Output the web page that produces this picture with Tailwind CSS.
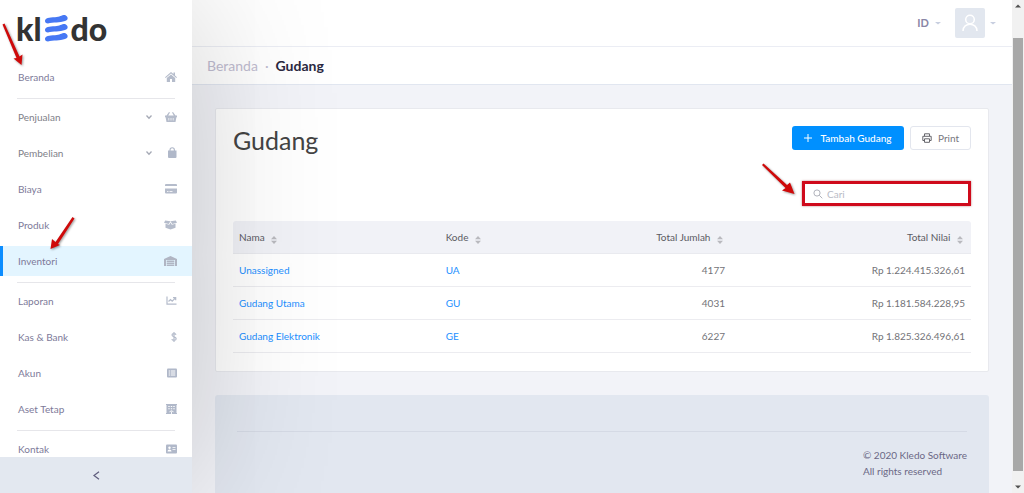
<!DOCTYPE html>
<html lang="id">
<head>
<meta charset="utf-8">
<meta name="viewport" content="width=device-width, initial-scale=1">
<title>Gudang - Kledo</title>
<script src="https://cdn.jsdelivr.net/npm/@tailwindcss/browser@4"></script>
</head>
<body class="relative flex h-screen overflow-hidden bg-[#f2f3f8] font-['Lato','Liberation_Sans',sans-serif] text-[10px] leading-4 text-[#6b6b73]">

<aside class="relative z-10 flex w-48 shrink-0 flex-col bg-white shadow-[0_0_150px_rgba(0,0,0,0.2)]">
  <a href="#" aria-label="kledo" class="flex h-[59px] shrink-0 items-start gap-[3px] pl-4 pt-[9px] text-[32px] font-black leading-10 text-[#333]">
    <span>kl</span>
    <svg class="mt-[6px] h-[27px] w-[23px] shrink-0" viewBox="0 0 23 27" fill="#4678f4"><path d="M0 6C0 3 4 2.500 10 2.300C15 2 16 0 20 0C24 2 23 5 20 6C15 8 8 7 3 8.500C1 8.500 0 7.500 0 6Z"/><path d="M0 15C0 12 4 11.500 10 11.300C15 11 16 9 20 9C24 11 23 14 20 15C15 17 8 16 3 17.500C1 17.500 0 16.500 0 15Z"/><path d="M0 24C0 21 4 20.500 10 20.300C15 20 16 18 20 18C24 20 23 23 20 24C15 26 8 25 3 26.500C1 26.500 0 25.500 0 24Z"/></svg>
    <span>do</span>
  </a>
  <nav class="min-h-0 flex-1 overflow-hidden text-[#7d7a99]">
    <a href="#" class="flex h-9 items-center justify-between pl-[18px] pr-[15px]">Beranda
      <svg class="size-3" viewBox="0 0 12 12" fill="#b5bccb"><path d="M6 1L0 6.200L.7 7L6 2.500L11.300 7L12 6.200L10 4.400V1.500H8.500V3.100Z"/><path d="M6 3.400L1.800 7V11H5V8H7V11H10.200V7Z"/></svg></a>
    <hr class="ml-[17px] mr-[17px] mt-[3px] border-[#e6e6ea]">
    <a href="#" class="flex h-9 items-center pl-[18px] pr-[15px] text-[#808088]"><span class="flex-1">Penjualan</span>
      <svg class="mr-3 size-2" viewBox="0 0 8 8" fill="none" stroke="#a5a9b5" stroke-width="1.300"><path d="M1.500 2.500L4 5.200L6.500 2.500"/></svg>
      <svg class="size-3" viewBox="0 0 12 12" fill="#b5bccb"><path d="M0 4.500H1.500L4 1L5 1.600L3.200 4.500H8.800L7 1.600L8 1L10.500 4.500H12V6.300H11.400L10.500 11H1.500L.6 6.300H0Z"/><path d="M3.800 7V9.500M6 7V9.500M8.200 7V9.500" stroke="#fff" stroke-width=".7"/></svg></a>
    <a href="#" class="flex h-9 items-center pl-[18px] pr-[15px] text-[#808088]"><span class="flex-1">Pembelian</span>
      <svg class="mr-3 size-2" viewBox="0 0 8 8" fill="none" stroke="#a5a9b5" stroke-width="1.300"><path d="M1.500 2.500L4 5.200L6.500 2.500"/></svg>
      <svg class="size-3" viewBox="0 0 12 12" fill="#b0b8c9"><path d="M3 3.500H11.500V10Q11.500 11 10.500 11H4Q3 11 3 10Z"/><path d="M5 5V3A2.200 2.200 0 0 1 9.400 3V5" fill="none" stroke="#b0b8c9" stroke-width="1.100"/></svg></a>
    <a href="#" class="flex h-9 items-center justify-between pl-[18px] pr-[15px]">Biaya
      <svg class="size-3" viewBox="0 0 12 12" fill="#b5bccb"><path d="M0 2Q0 1 1 1H11Q12 1 12 2V3H0ZM0 5.500H12V9.500Q12 10.500 11 10.500H1Q0 10.500 0 9.500Z"/><path d="M2 8.500H3.500M4.500 8.500H7.500" stroke="#fff" stroke-width=".8"/></svg></a>
    <a href="#" class="flex h-9 items-center justify-between pl-[18px] pr-[15px]">Produk
      <svg class="h-3 w-[13px]" viewBox="0 0 13 12" fill="#b5bccb"><path d="M1.200 1.500L6.500 2.200L4.700 5L0 3.700ZM11.800 1.500L6.500 2.200L8.300 5L13 3.700ZM1.500 4.700L5.200 5.700L6.500 3.500L7.800 5.700L11.500 4.700V8.800L6.500 10.500L1.500 8.800Z"/></svg></a>
    <a href="#" aria-current="page" class="my-[3px] flex h-[30px] items-center justify-between border-l-[3px] border-[#0c8dff] bg-[#e3f5ff] pl-[15px] pr-[15px]">Inventori
      <svg class="h-3 w-[13px]" viewBox="0 0 13 12" fill="#b0b5c3"><path d="M0 4L6.500 1L13 4V11H11V5H2V11H0Z"/><path d="M2.700 5.500H10.300V7.200H2.700ZM2.700 7.700H10.300V9.300H2.700ZM2.700 9.800H10.300V11H2.700Z"/></svg></a>
    <hr class="ml-[17px] mr-[17px] mt-[6px] border-[#e6e6ea]">
    <a href="#" class="flex h-9 items-center justify-between pl-[18px] pr-[15px]">Laporan
      <svg class="h-3 w-[11px]" viewBox="0 0 11 12" fill="none" stroke="#b5bccb" stroke-width="1.200"><path d="M1 1.500V9.200H10.500M2.500 6.500L4.500 4.500L6.200 6.200L9 3.300M7 2.600H9.700V5.300"/></svg></a>
    <a href="#" class="flex h-9 items-center justify-between pl-[18px] pr-[15px]">Kas &amp; Bank
      <svg class="h-3 w-[6px]" viewBox="0 0 6 12" fill="none" stroke="#b5bccb" stroke-width="1.200"><path d="M3 1V11M5 3.700C4.500 2.300 1 2.100 1 4.100C1 6.300 5.200 5.500 5.200 7.800C5.200 9.900 1.200 9.800 .8 8.100"/></svg></a>
    <a href="#" class="flex h-9 items-center justify-between pl-[18px] pr-[15px]">Akun
      <svg class="h-3 w-[10px]" viewBox="0 0 10 12"><rect y="1.500" width="10" height="9" rx="1" fill="#b0b8c9"/><path d="M1.700 4H3M3.700 4H8.300M1.700 6H3M3.700 6H8.300M1.700 8H3M3.700 8H8.300" stroke="#fff" stroke-width="1"/></svg></a>
    <a href="#" class="flex h-9 items-center justify-between pl-[18px] pr-[15px]">Aset Tetap
      <svg class="h-3 w-[11px]" viewBox="0 0 11 12"><path d="M0 1H11V2H10.500V10H11V11H0V10H.5V2H0Z" fill="#b0b8c9"/><path d="M2.300 3.500H3.700M4.800 3.500H6.200M7.300 3.500H8.700M2.300 5.700H3.700M4.800 5.700H6.200M7.300 5.700H8.700" stroke="#fff" stroke-width="1.100"/><path d="M3.500 8.800Q5.500 6.800 7.500 8.800M5.500 8.500V11" stroke="#fff" stroke-width=".9" fill="none"/></svg></a>
    <hr class="ml-[17px] mr-[17px] mt-[3px] border-[#e6e6ea]">
    <a href="#" class="flex h-9 items-center justify-between pl-[18px] pr-[15px]">Kontak
      <svg class="h-3 w-[11px]" viewBox="0 0 11 12"><rect y="1.500" width="11" height="9" rx="1" fill="#b0b8c9"/><circle cx="3.500" cy="4.700" r="1.200" fill="#fff"/><path d="M1.500 8.500Q1.500 6.500 3.500 6.500T5.500 8.500ZM6.500 4H9.500V4.800H6.500ZM6.500 6H9.500V6.800H6.500Z" fill="#fff"/></svg></a>
  </nav>
  <button type="button" aria-label="Tutup menu" class="flex h-9 shrink-0 items-center justify-center bg-[#e3e8f0]">
    <svg class="size-[9px]" viewBox="0 0 9 9" fill="none" stroke="#5f5c7d" stroke-width="1.200"><path d="M7 .8L2 4.500L7 8.200"/></svg>
  </button>
</aside>

<main class="flex min-w-0 flex-1 flex-col">
  <header class="flex h-[47px] shrink-0 items-center justify-end border-b border-[#ebedf4] bg-white pr-4">
    <button type="button" class="flex items-center gap-[6px] text-[11px] font-bold text-[#8a86a6]">ID <svg class="h-1 w-[6px]" viewBox="0 0 6 4" fill="#c8cfe0"><path d="M0 1H6L3 3.500Z"/></svg></button>
    <button type="button" aria-label="Akun pengguna" class="ml-[14px] flex items-center gap-[5px]">
      <span class="flex size-[30px] items-center justify-center rounded-[2px] bg-[#e2e7ef]"><svg class="h-[18px] w-4" viewBox="0 0 16 18" fill="none" stroke="#fff" stroke-width="1.500"><circle cx="8" cy="5.500" r="4.300"/><path d="M1 17C1 8 15 8 15 17"/></svg></span>
      <svg class="h-1 w-[6px]" viewBox="0 0 6 4" fill="#c8cfe0"><path d="M0 1H6L3 3.500Z"/></svg>
    </button>
  </header>
  <nav aria-label="Breadcrumb" class="flex h-[38px] shrink-0 items-center gap-[7px] border-b border-[#e1e6f0] bg-white pl-[15px] text-[14px] text-[#bfbcd0]">
    <a href="#">Beranda</a><span>·</span><span class="font-bold text-[#2b2941]">Gudang</span>
  </nav>

  <div class="flex min-h-0 flex-1 flex-col gap-[23px] overflow-hidden px-[23px] pt-[23px]">
    <section class="shrink-0 rounded-[2px] border border-[#e8e9ee] bg-white px-[17px] pb-[18px] pt-[17px]">
      <div class="flex h-6 items-center justify-between">
        <h1 class="pt-[3px] text-[25px] leading-8 text-[#444]">Gudang</h1>
        <div class="flex gap-[6px]">
          <button type="button" class="flex h-6 w-28 items-center justify-center gap-2 rounded-[3px] bg-[#0090ff] font-medium text-white"><svg class="size-2" viewBox="0 0 8 8" stroke="#fff"><path d="M4 0V8M0 4H8"/></svg>Tambah Gudang</button>
          <button type="button" class="flex h-6 w-[61px] items-center justify-center gap-[6px] rounded-[3px] border border-[#e3e6ee] bg-white text-[#77777d]"><svg class="size-[10px]" viewBox="0 0 10 10" fill="none" stroke="#66666c"><path d="M2.500 3V.8H7.500V3M2.500 7.500H.8V3.300H9.200V7.500H7.500M2.500 5.800H7.500V9.300H2.500Z"/></svg>Print</button>
        </div>
      </div>
      <div class="mt-[31px] flex justify-end">
        <label class="flex h-[25px] w-[169px] items-center gap-1 border-[3px] border-[#cf0a1b] bg-white pl-2 shadow-[0_0_2px_rgba(120,0,0,0.5)]">
          <svg class="size-[10px] shrink-0" viewBox="0 0 10 10" fill="none" stroke="#b0b2bb"><circle cx="4" cy="4" r="3.100"/><path d="M6.300 6.300L9.300 9.300"/></svg>
          <input type="text" aria-label="Cari" placeholder="Cari" class="w-full min-w-0 bg-transparent outline-none placeholder:text-[#b9bbc6]">
        </label>
      </div>
      <table class="mt-[15px] w-full table-fixed border-separate border-spacing-0">
        <thead class="bg-[#f1f2f7] text-[#5b5b63]">
          <tr class="h-[33px]">
            <th class="w-[28%] rounded-tl-[3px] border-b border-[#e9eaef] px-[6px] text-left font-normal">Nama <svg class="ml-1 mt-[3px] inline h-2 w-[6px]" viewBox="0 0 6 8" fill="#b9b9be"><path d="M0 3.300L3 0L6 3.300ZM0 4.700H6L3 8Z"/></svg></th>
            <th class="w-[20%] border-b border-[#e9eaef] px-[6px] text-left font-normal">Kode <svg class="ml-1 mt-[3px] inline h-2 w-[6px]" viewBox="0 0 6 8" fill="#b9b9be"><path d="M0 3.300L3 0L6 3.300ZM0 4.700H6L3 8Z"/></svg></th>
            <th class="border-b border-[#e9eaef] px-2 text-right font-normal">Total Jumlah <svg class="ml-1 mt-[3px] inline h-2 w-[6px]" viewBox="0 0 6 8" fill="#b9b9be"><path d="M0 3.300L3 0L6 3.300ZM0 4.700H6L3 8Z"/></svg></th>
            <th class="w-[240px] rounded-tr-[3px] border-b border-[#e9eaef] px-2 text-right font-normal">Total Nilai <svg class="ml-1 mt-[3px] inline h-2 w-[6px]" viewBox="0 0 6 8" fill="#b9b9be"><path d="M0 3.300L3 0L6 3.300ZM0 4.700H6L3 8Z"/></svg></th>
          </tr>
        </thead>
        <tbody class="text-[#737378]">
          <tr class="h-[33px]"><td class="border-b border-[#ececf0] px-[6px] text-[#2390ff]"><a href="#">Unassigned</a></td><td class="border-b border-[#ececf0] px-[6px] text-[#2390ff]"><a href="#">UA</a></td><td class="border-b border-[#ececf0] px-[6px] text-right">4177</td><td class="border-b border-[#ececf0] px-[6px] text-right">Rp 1.224.415.326,61</td></tr>
          <tr class="h-[33px]"><td class="border-b border-[#ececf0] px-[6px] text-[#2390ff]"><a href="#">Gudang Utama</a></td><td class="border-b border-[#ececf0] px-[6px] text-[#2390ff]"><a href="#">GU</a></td><td class="border-b border-[#ececf0] px-[6px] text-right">4031</td><td class="border-b border-[#ececf0] px-[6px] text-right">Rp 1.181.584.228,95</td></tr>
          <tr class="h-[33px]"><td class="border-b border-[#ececf0] px-[6px] text-[#2390ff]"><a href="#">Gudang Elektronik</a></td><td class="border-b border-[#ececf0] px-[6px] text-[#2390ff]"><a href="#">GE</a></td><td class="border-b border-[#ececf0] px-[6px] text-right">6227</td><td class="border-b border-[#ececf0] px-[6px] text-right">Rp 1.825.326.496,61</td></tr>
        </tbody>
      </table>
    </section>
    <footer class="flex-1 rounded-t-[3px] bg-[#e2e7f0] px-[22px] pt-9 text-[#6b6885]">
      <hr class="border-[#d5dae5]">
      <div class="mt-[15px] flex justify-end"><p>© 2020 Kledo Software<br>All rights reserved</p></div>
    </footer>
  </div>
</main>

<div aria-hidden="true" class="flex w-3 shrink-0 flex-col items-center justify-between bg-[#f1f1f1] py-1">
  <svg class="h-1 w-[6px]" viewBox="0 0 6 4" fill="#505050"><path d="M0 3.500L3 .5L6 3.500Z"/></svg>
  <div class="mb-[14px] mt-[30px] w-[10px] flex-1 bg-[#a8a8a8]"></div>
  <svg class="h-1 w-[6px]" viewBox="0 0 6 4" fill="#505050"><path d="M0 .5H6L3 3.500Z"/></svg>
</div>

<!-- Guide arrows laid over the interface -->
<svg aria-hidden="true" class="pointer-events-none absolute left-0 top-[22px] z-20 h-12 w-7 drop-shadow-[1px_1px_1px_rgba(0,0,0,0.4)]" viewBox="0 0 28 48" fill="#cf0a0a"><path d="M2.500 2.500L4.500 1.500L19.500 34.500L22.500 32.500L21.500 43L13.500 36.500L16.500 36Z"/></svg>
<svg aria-hidden="true" class="pointer-events-none absolute left-[46px] top-[214px] z-20 h-10 w-8 drop-shadow-[1px_1px_1px_rgba(0,0,0,0.4)]" viewBox="0 0 32 40" fill="#cf0a0a"><path d="M28.500 4.500L26.500 3L9.500 28L6 25L4.500 35L14 31L12 30Z"/></svg>
<svg aria-hidden="true" class="pointer-events-none absolute right-[227px] top-[160px] z-20 h-9 w-10 drop-shadow-[1px_1px_1px_rgba(0,0,0,0.4)]" viewBox="0 0 40 36" fill="#cf0a0a"><path d="M5 5L6.500 3.500L30 25L33 22.500L37.500 34L25 30.500L28.500 28Z"/></svg>
</body>
</html>
